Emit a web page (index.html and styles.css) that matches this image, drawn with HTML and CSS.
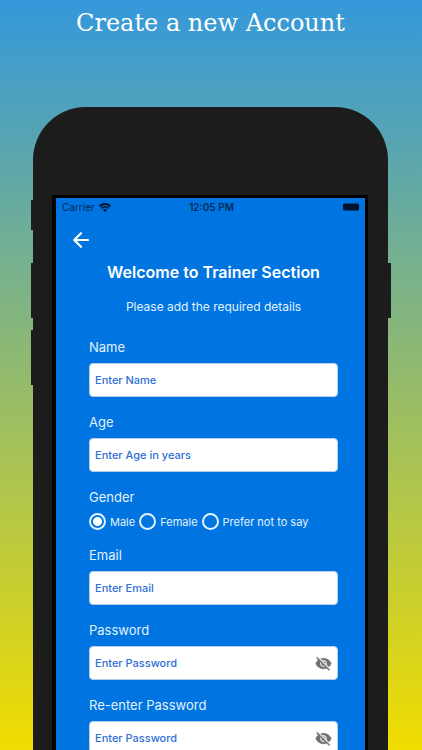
FILE: index.html
```html
<!DOCTYPE html>
<html lang="en">
<head>
<meta charset="utf-8">
<meta name="viewport" content="width=device-width, initial-scale=1">
<title>Create a new Account</title>
<link rel="stylesheet" href="styles.css">
</head>
<body>
<main class="page">
  <h1 class="headline">Create a new Account</h1>
  <div class="phone">
    <span class="key key-mute"></span>
    <span class="key key-up"></span>
    <span class="key key-down"></span>
    <span class="key key-power"></span>
    <div class="screen">
      <div class="status">
        <div class="carrier">
          <span>Carrier</span>
          <svg width="12" height="9" viewBox="0 0 12 9" fill="none" stroke="currentColor" stroke-width="1.9"><path d="M.5 3.3a7.8 7.8 0 0 1 11 0M2.4 5.4a5.1 5.1 0 0 1 7.2 0"/><path d="M4 6.9a2.8 2.8 0 0 1 4 0L6 9z" fill="currentColor" stroke="none"/></svg>
        </div>
        <span class="time">12:05 PM</span>
        <div class="battery"><svg width="19" height="8" viewBox="0 0 19 8" fill="currentColor"><rect y=".5" x="1" width="16" height="7" rx="1.5"/><path d="M17.8 2.8q1.2 1.2 0 2.4z" opacity=".5"/></svg></div>
      </div>
      <button class="back" type="button" aria-label="Back">
        <svg width="16" height="16" viewBox="0 0 16 16" fill="none" stroke="currentColor" stroke-width="2.2" stroke-linecap="round" stroke-linejoin="round"><path d="M15 8H1.5M8 1.2L1.2 8L8 14.8"/></svg>
      </button>
      <div class="content">
        <h2 class="title">Welcome to Trainer Section</h2>
        <p class="subtitle">Please add the required details</p>
        <form class="form">
          <div class="field">
            <label for="name">Name</label>
            <div class="box"><input id="name" type="text" placeholder="Enter Name"></div>
          </div>
          <div class="field">
            <label for="age">Age</label>
            <div class="box"><input id="age" type="text" placeholder="Enter Age in years"></div>
          </div>
          <div class="field" role="radiogroup" aria-labelledby="gender">
            <span class="legend" id="gender">Gender</span>
            <div class="options">
              <label><input type="radio" name="gender" checked>Male</label>
              <label><input type="radio" name="gender">Female</label>
              <label><input type="radio" name="gender">Prefer not to say</label>
            </div>
          </div>
          <div class="field">
            <label for="email">Email</label>
            <div class="box"><input id="email" type="email" placeholder="Enter Email"></div>
          </div>
          <div class="field">
            <label for="password">Password</label>
            <div class="box">
              <input id="password" type="password" placeholder="Enter Password">
              <button class="eye" type="button" aria-label="Show password"><svg width="17" height="17" viewBox="0 0 24 24" fill="currentColor" stroke="currentColor" stroke-width=".6"><path d="M12 7c2.76 0 5 2.24 5 5 0 .65-.13 1.26-.36 1.83l2.92 2.92c1.51-1.26 2.7-2.89 3.43-4.75-1.73-4.39-6-7.5-11-7.5-1.4 0-2.74.25-3.98.7l2.16 2.16C10.74 7.13 11.35 7 12 7zM2 4.27l2.28 2.28.46.46C3.08 8.3 1.78 10.02 1 12c1.73 4.39 6 7.5 11 7.5 1.55 0 3.03-.3 4.38-.84l.42.42L19.73 22 21 20.73 3.27 3 2 4.27zM7.53 9.8l1.55 1.55c-.05.21-.08.43-.08.65 0 1.66 1.34 3 3 3 .22 0 .44-.03.65-.08l1.55 1.55c-.67.33-1.41.53-2.2.53-2.76 0-5-2.24-5-5 0-.79.2-1.53.53-2.2zm4.31-.78l3.15 3.15.02-.16c0-1.66-1.34-3-3-3l-.17.01z"/></svg></button>
            </div>
          </div>
          <div class="field">
            <label for="repeat">Re-enter Password</label>
            <div class="box">
              <input id="repeat" type="password" placeholder="Enter Password">
              <button class="eye" type="button" aria-label="Show password"><svg width="17" height="17" viewBox="0 0 24 24" fill="currentColor" stroke="currentColor" stroke-width=".6"><path d="M12 7c2.76 0 5 2.24 5 5 0 .65-.13 1.26-.36 1.83l2.92 2.92c1.51-1.26 2.7-2.89 3.43-4.75-1.73-4.39-6-7.5-11-7.5-1.4 0-2.74.25-3.98.7l2.16 2.16C10.74 7.13 11.35 7 12 7zM2 4.27l2.28 2.28.46.46C3.08 8.3 1.78 10.02 1 12c1.73 4.39 6 7.5 11 7.5 1.55 0 3.03-.3 4.38-.84l.42.42L19.73 22 21 20.73 3.27 3 2 4.27zM7.53 9.8l1.55 1.55c-.05.21-.08.43-.08.65 0 1.66 1.34 3 3 3 .22 0 .44-.03.65-.08l1.55 1.55c-.67.33-1.41.53-2.2.53-2.76 0-5-2.24-5-5 0-.79.2-1.53.53-2.2zm4.31-.78l3.15 3.15.02-.16c0-1.66-1.34-3-3-3l-.17.01z"/></svg></button>
            </div>
          </div>
        </form>
      </div>
    </div>
  </div>
</main>
</body>
</html>
```
FILE: styles.css
```css
* {
  box-sizing: border-box;
}

body {
  margin: 0;
  font-family: Inter, "Liberation Sans", sans-serif;
}

.page {
  display: flex;
  flex-direction: column;
  height: 100vh;
  overflow: hidden;
  padding: 0 34px 0 33px;
  background: linear-gradient(#3498db, #f1dd00);
}

.headline {
  flex: none;
  margin: 0 0 61px;
  font: 400 24px/46px "DejaVu Serif", serif;
  color: #fff;
  text-align: center;
  white-space: nowrap;
}

.phone {
  position: relative;
  flex: none;
  padding: 88px 20px 0 19px;
  background: #1c1c1c;
  border-radius: 53px 53px 0 0;
}

.key {
  position: absolute;
  left: -2px;
  width: 4px;
  height: 55px;
  background: #1c1c1c;
}

.key-mute {
  top: 93px;
  height: 30px;
}

.key-up {
  top: 156px;
}

.key-down {
  top: 223px;
}

.key-power {
  top: 156px;
  right: -3px;
  left: auto;
}

.screen {
  border: solid #000;
  border-width: 3px 3px 0 4px;
  background: #0075e1;
  color: #e2f1ff;
}

.status {
  display: grid;
  grid-template-columns: 1fr auto 1fr;
  align-items: center;
  height: 18px;
  padding: 0 4px 0 6px;
  font-size: 10px;
  color: #052a58;
}

.carrier {
  display: flex;
  align-items: center;
  gap: 4px;
}

.carrier svg,
.battery {
  color: #00142e;
}

.time {
  font-weight: 600;
}

.battery {
  display: flex;
  justify-content: flex-end;
}

.back {
  display: flex;
  margin: 16px 0 0 17px;
  padding: 0;
  border: 0;
  background: none;
  color: #fff;
}

.content {
  padding: 14px 27px 0 33px;
}

.title {
  margin: 0;
  font-size: 16px;
  font-weight: 600;
  line-height: 20px;
  color: #fff;
  text-align: center;
}

.subtitle {
  margin: 15px 0 20px;
  font-size: 12px;
  line-height: 20px;
  text-align: center;
}

.form {
  display: grid;
  gap: 15px;
}

.field {
  display: grid;
  gap: 6px;
  font-size: 13px;
  line-height: 20px;
}

.box {
  display: flex;
  align-items: center;
  height: 34px;
  padding: 0 5px;
  border: 1px solid #b5cff0;
  border-radius: 4px;
  background: #fff;
}

.box input {
  flex: 1;
  min-width: 0;
  padding: 0;
  border: 0;
  outline: 0;
  background: none;
  font: 500 11px/20px Inter, "Liberation Sans", sans-serif;
  color: #2468d2;
}

.box input::placeholder {
  color: #2f70d6;
  opacity: 1;
}

.eye {
  display: flex;
  padding: 0;
  border: 0;
  background: none;
  color: #707070;
}

.options {
  display: flex;
  gap: 4px;
  height: 17px;
}

.options label {
  display: flex;
  align-items: center;
  gap: 4px;
  font-size: 11px;
  white-space: nowrap;
}

.options input {
  appearance: none;
  width: 17px;
  height: 17px;
  margin: 0;
  border: 2px solid #e2f1ff;
  border-radius: 50%;
}

.options input:checked {
  background: radial-gradient(circle, #fff 4px, transparent 5px);
}
```
